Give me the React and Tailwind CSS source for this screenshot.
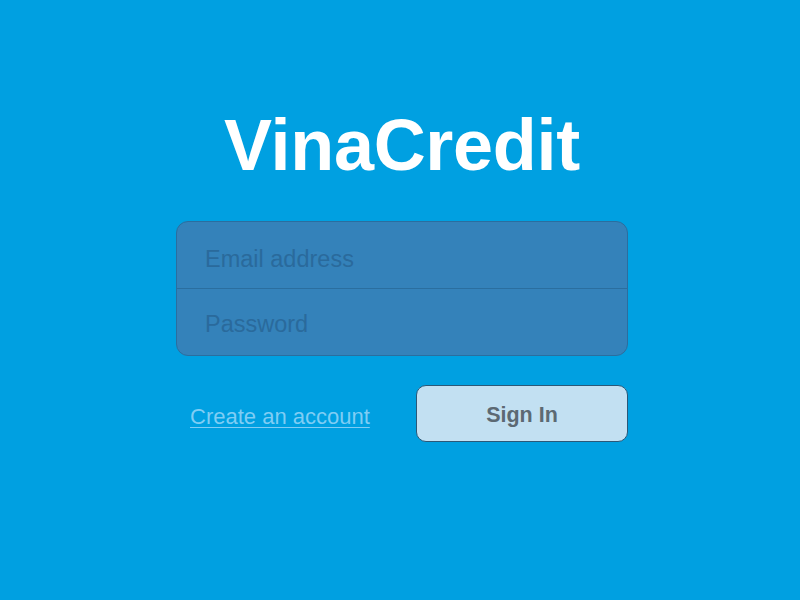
export default function App() {
  const font = { fontFamily: '"Liberation Sans", Arial, Helvetica, sans-serif' };
  return (
    <div className="w-[800px] h-[600px] bg-[#00a0e1] flex flex-col items-center pl-[4px]" style={font}>
      <h1 className="mt-[109px] text-[72px] leading-none font-bold text-white tracking-[-0.3px]">VinaCredit</h1>
      <div className="mt-[40px] w-[452px] rounded-[12px] border border-[#2a6e9f] bg-[#3482ba] flex flex-col">
        <div className="h-[67px] flex items-center pl-[28px] pt-[9px] border-b border-[#2a6e9f]">
          <span className="text-[23.5px] text-[#2a6a9c]">Email address</span>
        </div>
        <div className="h-[66px] flex items-center pl-[28px] pt-[6px]">
          <span className="text-[23.5px] text-[#2a6a9c]">Password</span>
        </div>
      </div>
      <div className="mt-[29px] w-[452px] flex items-center justify-between">
        <a className="ml-[14px] mt-[5px] text-[22px] text-[#7fcdf4] underline decoration-1 underline-offset-[3px]">Create an account</a>
        <button className="w-[212px] h-[57px] rounded-[10px] border border-[#2b5878] bg-[#c2e0f2] text-[21.5px] font-bold text-[#5c6973] pt-[3px]">Sign In</button>
      </div>
    </div>
  );
}
